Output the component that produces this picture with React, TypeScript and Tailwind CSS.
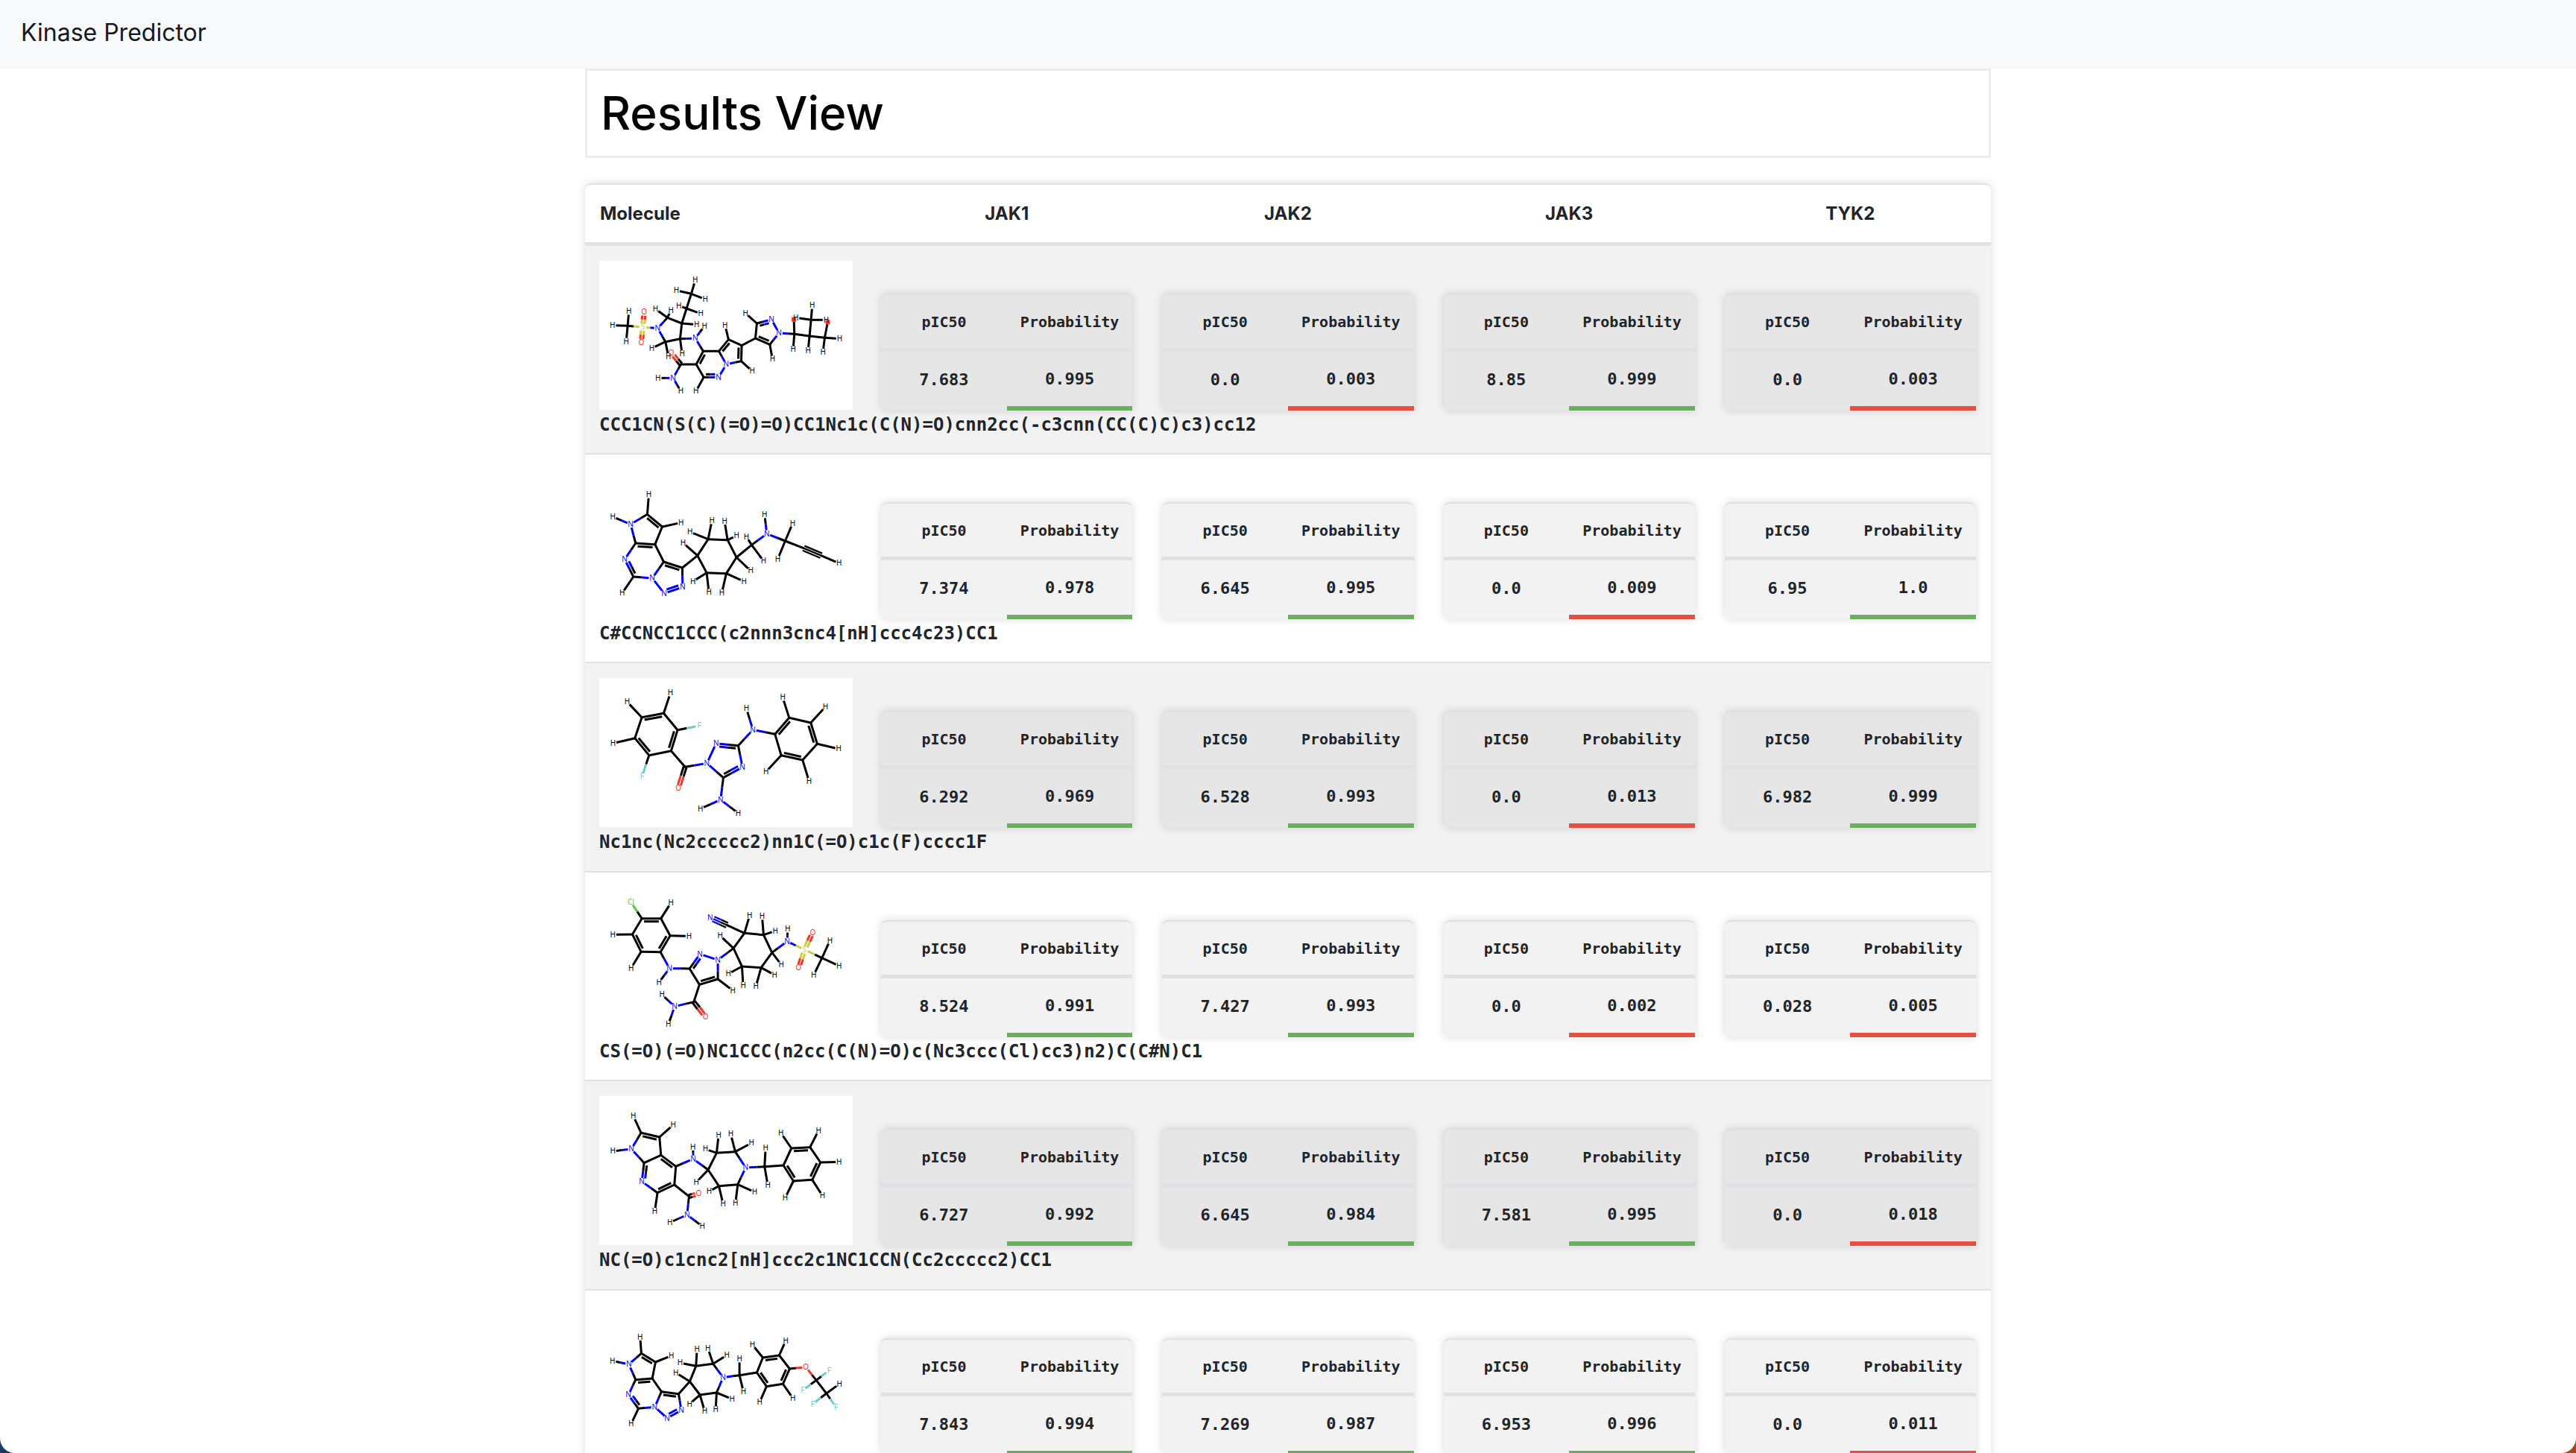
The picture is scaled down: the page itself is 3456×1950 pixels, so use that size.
import React from 'react';

type Molecule = {
  originY: number;
  atoms: string;
  hydrogens: string;
  bonds: string;
  rings: [number, number][];
};

type Score = { pic50: string; probability: string; active: boolean };

type Result = { smiles?: string; rowHeight: string; molecule: Molecule; scores: Score[] };

const ELEMENT_COLORS: Record<string, string> = {
  C: '#000000',
  H: '#000000',
  N: '#0000ff',
  O: '#f03528',
  S: '#cccc45',
  F: '#66cccc',
  Cl: '#55cc3c',
  X: '#000000',
};

/* Atoms are "element,x,y"; hydrogens are "x,y,parent"; bonds are "a-b", "a=b", "a=b:ring" or "a#b". */
function parseMolecule(molecule: Molecule) {
  const atoms = molecule.atoms.split(' ').map((entry) => {
    const [el, x, y] = entry.split(',');
    return { el, x: Number(x), y: Number(y) };
  });
  const bonds = molecule.bonds.split(' ').map((entry) => {
    const [, a, kind, b, ring] = entry.match(/^(\d+)([-=#])(\d+)(?::(\d+))?$/)!;
    return { a: Number(a), b: Number(b), kind, ring: ring === undefined ? -1 : Number(ring) };
  });
  molecule.hydrogens.split(' ').forEach((entry) => {
    const [x, y, parent] = entry.split(',').map(Number);
    atoms.push({ el: 'H', x, y });
    bonds.push({ a: parent, b: atoms.length - 1, kind: '-', ring: -1 });
  });
  return { atoms, bonds };
}

function MoleculeDrawing({ molecule, label }: { molecule: Molecule; label: string }) {
  const { atoms, bonds } = parseMolecule(molecule);
  const gap = (el: string) => (el === 'C' ? 0 : el === 'X' ? 8 : 14);

  return (
    <svg
      role="img"
      aria-label={label}
      viewBox={`72 ${molecule.originY} 1020 600`}
      className="mb-[2px] block h-[200px] w-full bg-white"
    >
      {bonds.map((bond, i) => {
        const a = atoms[bond.a];
        const b = atoms[bond.b];
        const length = Math.hypot(b.x - a.x, b.y - a.y);
        const ux = (b.x - a.x) / length;
        const uy = (b.y - a.y) / length;
        let offsets: [number, number][] = [[0, 0]];
        if (bond.kind === '#') offsets = [[0, 0], [-10, 0], [10, 0]];
        if (bond.kind === '=' && bond.ring < 0) offsets = [[-6, 0], [6, 0]];
        if (bond.kind === '=' && bond.ring >= 0) {
          const [cx, cy] = molecule.rings[bond.ring];
          const side = Math.sign((cx - a.x) * -uy + (cy - a.y) * ux);
          offsets = [[0, 0], [side * 12, 9]];
        }
        return offsets.map(([off, trim], k) => {
          const start = Math.max(gap(a.el), trim);
          const end = length - Math.max(gap(b.el), trim);
          const mid = (start + end) / 2;
          const at = (t: number) => [a.x + ux * t - uy * off, a.y + uy * t + ux * off];
          const [x1, y1] = at(start);
          const [xm, ym] = at(mid);
          const [x2, y2] = at(end);
          const width = bond.kind === '#' ? 7 : 9;
          const cap = off === 0 ? 'round' : 'butt';
          const c1 = ELEMENT_COLORS[a.el];
          const c2 = ELEMENT_COLORS[b.el];
          if (c1 === c2) {
            return <line key={`${i}-${k}`} x1={x1} y1={y1} x2={x2} y2={y2} stroke={c1} strokeWidth={width} strokeLinecap={a.el === 'C' && b.el === 'C' ? cap : 'butt'} />;
          }
          return (
            <g key={`${i}-${k}`} strokeWidth={width}>
              <line x1={x1} y1={y1} x2={xm} y2={ym} stroke={c1} />
              <line x1={xm} y1={ym} x2={x2} y2={y2} stroke={c2} />
            </g>
          );
        });
      })}
      {atoms.map((atom, i) => {
        if (atom.el === 'C') return null;
        if (atom.el === 'X') {
          return <rect key={i} x={atom.x - 9} y={atom.y - 9} width={18} height={18} fill="#f03528" />;
        }
        return (
          <text
            key={i}
            x={atom.x}
            y={atom.y + 10}
            textAnchor="middle"
            fontSize={30}
            fill={ELEMENT_COLORS[atom.el]}
            className="font-['Noto_Sans',sans-serif] font-normal"
          >
            {atom.el}
          </text>
        );
      })}
    </svg>
  );
}

const score = (pic50: string, probability: string): Score => ({
  pic50,
  probability,
  active: Number(probability) >= 0.5,
});

const TARGETS = ['JAK1', 'JAK2', 'JAK3', 'TYK2'];

const RESULTS: Result[] = [
  {
    smiles: 'CCC1CN(S(C)(=O)=O)CC1Nc1c(C(N)=O)cnn2cc(-c3cnn(CC(C)C)c3)cc12',
    rowHeight: 'h-[280px]',
    scores: [score('7.683', '0.995'), score('0.0', '0.003'), score('8.85', '0.999'), score('0.0', '0.003')],
    molecule: {
      originY: 30,
      atoms:
        'C,186,292 S,247,297 O,252,237 O,241,359 N,307,302 C,346,259 C,404,282 C,397,344 C,338,356 C,423,222 C,442,163 N,458,342 C,490,394 C,462,447 C,400,447 O,362,401 N,369,502 C,492,499 N,552,499 N,583,447 C,553,394 C,592,347 C,645,371 C,643,434 C,700,342 C,706,282 N,765,266 N,795,321 C,758,367 C,857,325 C,918,333 C,979,340 C,924,268 X,855,266 X,991,277',
      hydrogens:
        '191,233,0 125,290,0 180,355,0 298,224,5 360,230,5 392,211,9 480,243,9 458,108,10 382,149,10 498,185,10 464,287,6 495,293,11 405,405,7 283,382,8 350,416,8 308,502,16 400,555,16 461,555,17 578,290,21 687,474,23 660,241,25 769,426,28 852,387,29 912,392,30 1039,344,31 972,398,31 929,210,32 863,259,32 985,268,32',
      bonds:
        '0-1 1=2 1=3 1-4 4-5 5-6 6-7 7-8 8-4 6-9 9-10 7-11 11-12 12=13:0 13-14 14=15 14-16 13-17 17=18:0 18-19 19-20 20-12 20=21:1 21-22 22=23:1 23-19 22-24 24-25 25=26:2 26-27 27-28 28=24:2 27-29 29-30 30-31 30-32 29-33 31-34',
      rings: [[522, 447], [603, 399], [745, 316]],
    },
  },
  {
    smiles: 'C#CCNCC1CCC(c2nnn3cnc4[nH]ccc4c23)CC1',
    rowHeight: 'h-[280px]',
    scores: [score('7.374', '0.978'), score('6.645', '0.995'), score('0.0', '0.009'), score('6.95', '1.0')],
    molecule: {
      originY: -30,
      atoms:
        'N,198,191 C,265,151 C,325,201 C,296,272 C,218,267 N,174,332 C,209,402 N,285,408 C,331,342 C,406,366 N,407,444 N,333,469 C,467,317 C,510,251 C,588,254 C,624,324 C,583,389 C,504,386 C,685,274 N,746,229 C,820,258 C,894,287 C,965,317',
      hydrogens:
        '126,161,0 271,72,1 401,184,2 164,468,6 409,266,12 437,222,13 525,176,13 576,178,14 624,237,14 681,378,15 654,421,16 565,467,16 449,421,17 513,465,17 664,241,18 733,339,18 737,152,19 850,187,20 790,331,20 1037,348,22',
      bonds:
        '0-1 1=2:0 2-3 3=4:1 4-0 4-5 5=6:1 6-7 7-8 8-3 8=9:2 9-10 10=11:2 11-7 9-12 12-13 13-14 14-15 15-16 16-17 17-12 15-18 18-19 19-20 20-21 21#22',
      rings: [[260, 216], [252, 337], [352, 406]],
    },
  },
  {
    smiles: 'Nc1nc(Nc2ccccc2)nn1C(=O)c1c(F)cccc1F',
    rowHeight: 'h-[281px]',
    scores: [score('6.292', '0.969'), score('6.528', '0.993'), score('0.0', '0.013'), score('6.982', '0.999')],
    molecule: {
      originY: 30,
      atoms:
        'C,331,172 C,243,188 C,215,272 C,272,341 C,361,323 C,387,239 F,474,222 F,244,426 C,417,388 O,390,474 N,505,373 N,542,293 C,631,302 N,648,389 C,571,431 N,560,520 N,690,238 C,779,256 C,836,190 C,923,210 C,949,295 C,890,360 C,804,341',
      hydrogens:
        '358,90,0 184,126,1 127,293,2 479,556,15 631,574,15 664,153,16 810,108,18 982,146,19 1035,315,20 916,445,21 743,407,22',
      bonds:
        '0=1:0 1-2 2=3:0 3-4 4=5:0 5-0 5-6 3-7 4-8 8=9 8-10 10-11 11=12:1 12-13 13=14:1 14-10 14-15 12-16 16-17 17=18:2 18-19 19=20:2 20-21 21=22:2 22-17',
      rings: [[301, 256], [579, 358], [863, 275]],
    },
  },
  {
    smiles: 'CS(=O)(=O)NC1CCC(n2cc(C(N)=O)c(Nc3ccc(Cl)cc3)n2)C(C#N)C1',
    rowHeight: 'h-[280px]',
    scores: [score('8.524', '0.991'), score('7.427', '0.993'), score('0.0', '0.002'), score('0.028', '0.005')],
    molecule: {
      originY: 3,
      atoms:
        'Cl,199,62 C,243,128 C,320,128 C,357,197 C,318,263 C,240,262 C,205,192 N,354,329 C,435,330 N,477,271 N,549,295 C,549,372 C,475,394 C,452,464 O,500,525 N,375,482 C,612,248 C,656,187 C,733,194 C,767,265 C,723,326 C,646,321 C,586,155 N,518,124 N,828,220 S,898,254 O,931,184 O,874,327 C,968,287',
      hydrogens:
        '360,65,2 433,199,3 200,328,5 126,193,6 312,385,7 609,418,11 324,435,15 350,554,15 558,197,16 677,115,17 727,119,18 780,178,18 804,314,19 777,355,20 702,402,20 591,351,21 651,398,21 830,171,24 1000,217,28 1037,319,28 935,356,28',
      bonds:
        '0-1 1=2:0 2-3 3=4:0 4-5 5=6:0 6-1 4-7 7-8 8=9:1 9-10 10-11 11=12:1 12-8 12-13 13=14 13-15 10-16 16-17 17-18 18-19 19-20 20-21 21-16 17-22 22#23 19-24 24-25 25=26 25=27 25-28',
      rings: [[281, 195], [497, 332]],
    },
  },
  {
    smiles: 'NC(=O)c1cnc2[nH]ccc2c1NC1CCN(Cc2ccccc2)CC1',
    rowHeight: 'h-[281px]',
    scores: [score('6.727', '0.992'), score('6.645', '0.984'), score('7.581', '0.995'), score('0.0', '0.018')],
    molecule: {
      originY: 36,
      atoms:
        'N,201,249 C,240,184 C,314,201 C,320,274 C,252,305 N,243,380 C,306,425 C,374,393 C,380,319 N,450,289 C,433,440 O,472,429 N,425,514 C,510,333 C,544,265 C,619,260 N,661,324 C,629,392 C,553,398 C,737,320 C,813,315 C,845,246 C,920,242 C,962,303 C,929,373 C,853,378',
      hydrogens:
        '126,258,0 209,117,1 369,152,2 295,500,6 449,241,9 356,545,12 486,560,12 462,383,13 499,249,14 552,193,14 601,189,15 684,225,15 697,422,17 620,467,17 514,420,18 570,470,18 741,246,19 750,395,19 803,185,21 954,175,22 1037,301,23 970,437,24 820,446,25',
      bonds:
        '0-1 1=2:0 2-3 3-4 4-0 4=5:1 5-6 6=7:1 7-8 8=3:1 8-9 7-10 10=11 10-12 9-13 13-14 14-15 15-16 16-17 17-18 18-13 16-19 19-20 20-21 21=22:2 22-23 23=24:2 24-25 25=20:2',
      rings: [[265, 243], [313, 349], [887, 310]],
    },
  },
  {
    rowHeight: 'h-[280px]',
    scores: [score('7.843', '0.994'), score('7.269', '0.987'), score('6.953', '0.996'), score('0.0', '0.011')],
    molecule: {
      originY: -24,
      atoms:
        'N,191,213 C,241,169 C,298,204 C,285,270 C,218,275 N,189,336 C,229,391 N,295,385 C,322,323 C,391,332 N,402,398 N,345,430 C,436,282 C,461,220 C,530,211 N,570,266 C,544,327 C,477,336 C,636,257 C,706,246 C,730,186 C,796,177 C,838,231 C,811,292 C,745,302 O,903,224 C,945,277 C,986,330 F,996,238 F,890,318 F,930,373 F,1024,385',
      hydrogens:
        '125,199,0 236,103,1 362,178,2 200,453,6 380,247,12 397,207,13 465,153,13 509,149,14 585,176,14 606,353,16 540,396,16 435,373,17 496,402,17 636,191,18 652,323,18 688,134,20 822,118,21 851,349,23 717,366,24 1038,292,27',
      bonds:
        '0-1 1=2:0 2-3 3=4:1 4-0 4-5 5=6:1 6-7 7-8 8-3 8=9:2 9-10 10=11:2 11-7 9-12 12-13 13-14 14-15 15-16 16-17 17-12 15-18 18-19 19-20 20=21:3 21-22 22=23:3 23-24 24=19:3 22-25 25-26 26-27 26-28 26-29 27-30 27-31',
      rings: [[247, 226], [256, 330], [351, 374], [771, 239]],
    },
  },
];

function ScoreTable({ value, striped }: { value: Score; striped: boolean }) {
  return (
    <div
      className={`overflow-hidden rounded-t-lg rounded-bl-lg border-t-2 border-[#dee2e6] shadow-[0_0_12px_rgba(0,0,0,0.15)] ${
        striped ? 'bg-[#e6e6e6]' : 'bg-[#f2f2f2]'
      }`}
    >
      <table className="w-full table-fixed border-separate border-spacing-0 text-center font-['DejaVu_Sans_Mono',monospace] font-bold">
        <thead>
          <tr className="h-[76px] text-[20px] leading-[30px]">
            <th scope="col" className="border-b-5 border-[#dee2e6] p-0">pIC50</th>
            <th scope="col" className="border-b-5 border-[#dee2e6] p-0">Probability</th>
          </tr>
        </thead>
        <tbody>
          <tr className="h-[79px] text-[22px] leading-[30px]">
            <td className="p-0 pb-1">{value.pic50}</td>
            <td className={`border-b-6 p-0 ${value.active ? 'border-[#6aae5e]' : 'border-[#e25241]'}`}>
              {value.probability}
            </td>
          </tr>
        </tbody>
      </table>
    </div>
  );
}

export default function App() {
  return (
    <div className="h-screen overflow-hidden bg-linear-to-r from-[#1f3a63] to-[#a04820]">
      <div className="h-full overflow-hidden rounded-b-[20px] bg-white font-['Inter',sans-serif] text-[#212529]">
        <nav className="flex h-[92px] items-center bg-[#f8f9fb] px-7 pb-1">
          <a href="#" className="text-[32px] leading-[48px] text-[#16181b]">
            Kinase Predictor
          </a>
        </nav>
        <main className="mx-auto w-[1886px] max-w-full">
          <header className="border-3 border-[#ececec] px-[18px] pt-[17px] pb-[17px]">
            <h1 className="text-[62px] leading-[80px] font-medium text-black">Results View</h1>
          </header>
          <div className="mt-[34px] overflow-hidden rounded-lg border-t-2 border-[#dee2e6] shadow-[0_0_12px_rgba(0,0,0,0.15)]">
            <table className="w-full table-fixed border-separate border-spacing-0">
              <thead>
                <tr className="h-[82px] text-[24px] leading-[36px]">
                  <th scope="col" className="border-b-5 border-[#dee2e6] px-5 py-0 text-left font-bold">Molecule</th>
                  {TARGETS.map((target) => (
                    <th key={target} scope="col" className="border-b-5 border-[#dee2e6] px-5 py-0 text-center font-bold">
                      {target}
                    </th>
                  ))}
                </tr>
              </thead>
              <tbody>
                {RESULTS.map((result, index) => {
                  const striped = index % 2 === 0;
                  return (
                    <tr key={index} className={`${result.rowHeight} ${striped ? 'bg-[#f2f2f2]' : 'bg-white'}`}>
                      <th
                        scope="row"
                        className="border-b-2 border-[#dee2e6] pt-5 pr-[18px] pb-0 pl-[19px] text-left align-top font-['DejaVu_Sans_Mono',monospace] text-[24px] leading-[36px] font-bold whitespace-nowrap"
                      >
                        <MoleculeDrawing molecule={result.molecule} label={`Structure of molecule ${index + 1}`} />
                        {result.smiles && <span className="relative">{result.smiles}</span>}
                      </th>
                      {result.scores.map((value, i) => (
                        <td key={TARGETS[i]} className="border-b-2 border-[#dee2e6] px-5 pt-16 pb-0 align-top">
                          <ScoreTable value={value} striped={striped} />
                        </td>
                      ))}
                    </tr>
                  );
                })}
              </tbody>
            </table>
          </div>
        </main>
      </div>
    </div>
  );
}
